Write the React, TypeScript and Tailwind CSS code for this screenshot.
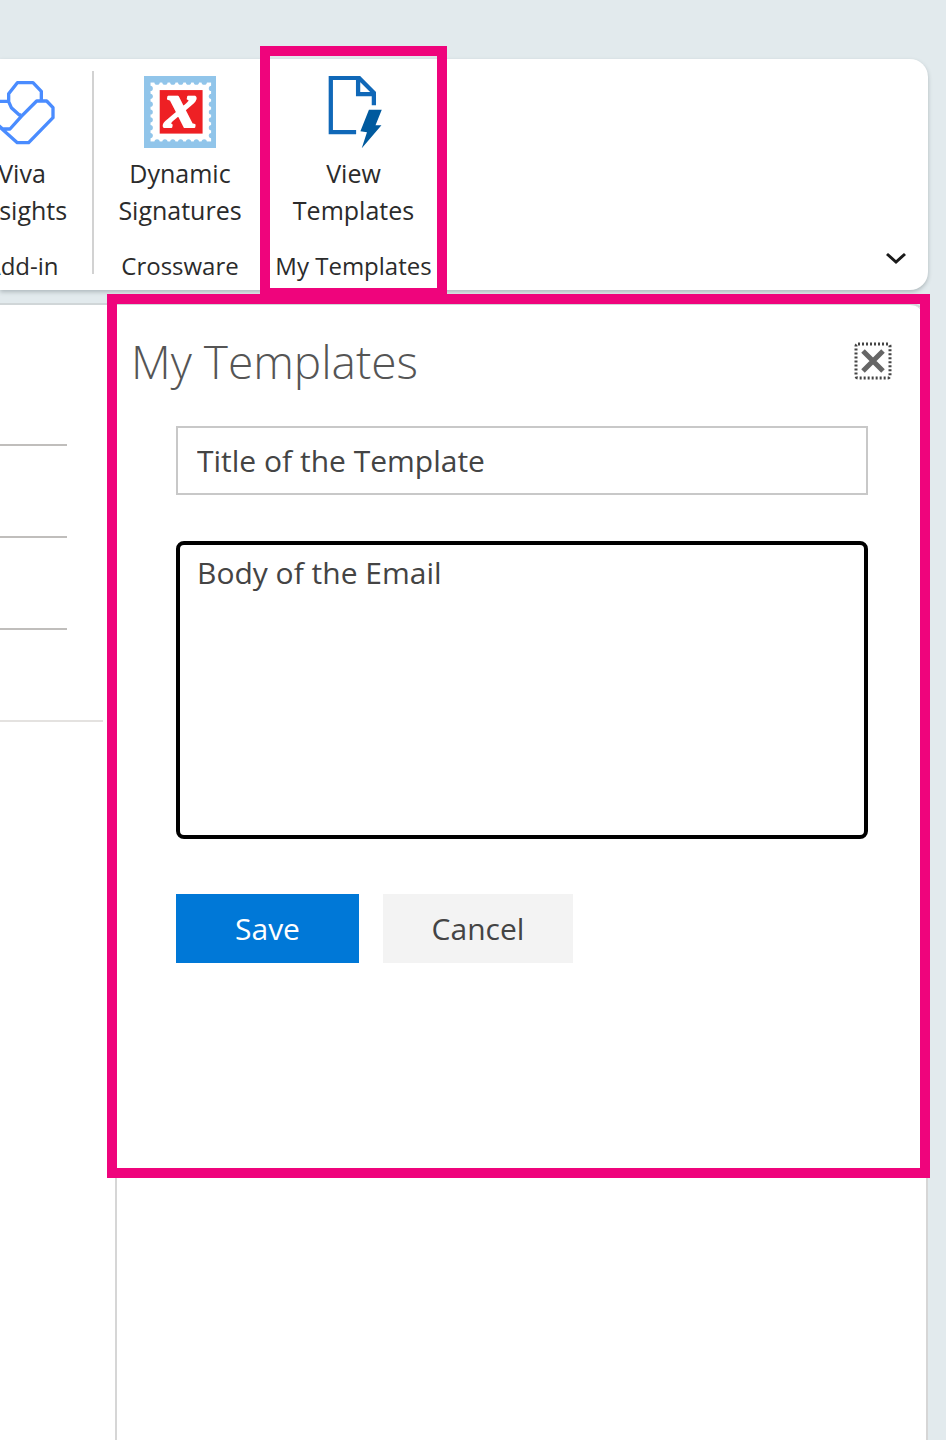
import { useState, type ReactNode } from "react";

interface RibbonGroupProps {
    icon: ReactNode;
    lines: [string, string];
    label: string;
    className: string;
    highlighted?: boolean;
}

function VivaIcon() {
    return (
        <svg className="size-18" viewBox="-42 107 216 216" fill="none" stroke="#4a8cff" strokeWidth="10" strokeLinejoin="round">
            <path d="M64 224 H58 L34 202 L26 184 V160 L52 127 H99 L124 153 V181" />
            <path d="M26 183 H-14 L-36 205 V230 L6 266 L52 307 H86 L159 232 V202 L140 182 H110 L64 228 L30 266 H8 L-6 254" />
        </svg>
    );
}

function StampIcon() {
    const marks = [43, 67, 91, 115, 139, 163, 187];
    return (
        <svg className="size-18" viewBox="0 0 220 220">
            <rect width="220" height="220" fill="#91c5ea" />
            <rect x="20" y="20" width="185" height="180" fill="#fff" />
            {marks.map((n) => (
                <g key={n} fill="#91c5ea">
                    <circle cx={n - 3} cy="19" r="8" />
                    <circle cx={n - 3} cy="201" r="8" />
                    <circle cx="19" cy={n - 5} r="8" />
                    <circle cx="206" cy={n - 5} r="8" />
                </g>
            ))}
            <rect x="48" y="43" width="131" height="133" fill="#ee2024" />
            <text
                x="113"
                y="156"
                textAnchor="middle"
                fill="#fff"
                stroke="#fff"
                strokeWidth="6"
                strokeLinejoin="round"
                className="font-['Liberation_Serif',serif] text-[200px] font-bold italic"
            >
                x
            </text>
        </svg>
    );
}

function TemplateIcon() {
    return (
        <svg className="size-18" viewBox="202 107 219 219" fill="none">
            <path d="M321 278 H244 V113 H330 L375 158 V196 M327 113 V162 H375" stroke="#1068b8" strokeWidth="13" />
            <path d="M360 210 H399 L380 257 H398 L338 327 L354 278 L334 275 Z" fill="#005a9e" />
        </svg>
    );
}

function RibbonGroup({ icon, lines, label, className, highlighted }: RibbonGroupProps) {
    return (
        <div className={`relative flex shrink-0 flex-col items-center pt-[17px] pb-1.5 ${className}`}>
            <button type="button" className="flex flex-col items-center">
                {icon}
                <span className="mt-[7px] whitespace-nowrap">
                    {lines[0]}
                    <br />
                    {lines[1]}
                </span>
            </button>
            <div className="mt-[18px] text-[24px] leading-[37px] whitespace-nowrap">{label}</div>
            {highlighted && (
                <div className="pointer-events-none absolute -top-[13px] -right-2.5 -bottom-2 -left-2.5 border-10 border-[#ef047c]" />
            )}
        </div>
    );
}

function Ribbon() {
    return (
        <div className="mr-[18px] flex rounded-r-[18px] bg-white text-center text-[25px] leading-[37px] shadow-[0_2px_4px_#aeb8bc]">
            <RibbonGroup icon={<VivaIcon />} lines={["Viva", "Insights"]} label="Add-in" className="-ml-12 w-[140px]" />
            <div className="mt-3 mb-4 w-[2px] shrink-0 bg-[#d2d2d2]" />
            <RibbonGroup icon={<StampIcon />} lines={["Dynamic", "Signatures"]} label="Crossware" className="w-[172px]" />
            <RibbonGroup
                icon={<TemplateIcon />}
                lines={["View", "Templates"]}
                label="My Templates"
                className="ml-1 w-[167px]"
                highlighted
            />
            <button type="button" aria-label="Collapse ribbon" className="mr-5 mb-5 ml-auto self-end">
                <svg className="size-6" viewBox="0 0 24 24" fill="none" stroke="#1a1a1a" strokeWidth="3">
                    <path d="M3 8 L12 16 L21 8" />
                </svg>
            </button>
        </div>
    );
}

function ComposePane() {
    return (
        <div className="w-[115px] shrink-0 pt-[49px]">
            <div className="mr-12 h-[92px] border-b-2 border-[#c0bebc]" />
            <div className="mr-12 h-[92px] border-b-2 border-[#c0bebc]" />
            <div className="mr-12 h-[92px] border-b-2 border-[#c0bebc]" />
            <div className="mr-3 h-[92px] border-b-2 border-[#e4e2e0]" />
        </div>
    );
}

function TemplatesPanel() {
    const [title, setTitle] = useState("Title of the Template");
    const [body, setBody] = useState("Body of the Email");

    return (
        <div className="relative min-w-0 grow rounded-tr-[18px] border-x-2 border-[#d6d6d6] pr-[58px] pl-[59px]">
            <div className="-mr-[24px] -ml-[45px] flex h-[121px] items-center justify-between pb-[10px]">
                <h1 className="text-[46px] leading-[60px] font-light text-[#555]">My Templates</h1>
                <button type="button" aria-label="Close" className="size-[38px]">
                    <svg viewBox="0 0 38 38" fill="none">
                        <rect x="2" y="2" width="34" height="34" rx="2" stroke="#444" strokeWidth="3" strokeDasharray="2 2" />
                        <path d="M9 9 L29 29 M29 9 L9 29" stroke="#666" strokeWidth="5" />
                    </svg>
                </button>
            </div>
            <input
                aria-label="Template title"
                value={title}
                onChange={(e) => setTitle(e.target.value)}
                className="block h-[69px] w-full border-2 border-[#c8c8c8] px-[19px] text-[30px] text-[#444] outline-none"
            />
            <textarea
                aria-label="Template body"
                value={body}
                onChange={(e) => setBody(e.target.value)}
                className="mt-[46px] block h-[298px] w-full resize-none rounded-lg border-4 border-black px-[17px] pt-2 text-[30px] leading-[40px] text-[#444] outline-none"
            />
            <div className="mt-[55px] flex gap-6 text-[30px]">
                <button type="button" className="h-[69px] w-[183px] bg-[#0078d7] text-white">
                    Save
                </button>
                <button type="button" className="h-[69px] w-[190px] bg-[#f3f3f3] text-[#444]">
                    Cancel
                </button>
            </div>
            <div className="pointer-events-none absolute -top-[11px] -right-1 -left-2.5 h-[884px] border-10 border-[#ef047c]" />
        </div>
    );
}

export default function App() {
    return (
        <div className="flex min-h-screen flex-col overflow-hidden bg-[#e2eaed] pt-[59px] font-['Open_Sans','Noto_Sans',sans-serif] text-[#2b2b2b]">
            <Ribbon />
            <main className="mt-[13px] mr-[18px] flex grow rounded-tr-[18px] border-t-2 border-[#d0d6d8] bg-white">
                <ComposePane />
                <TemplatesPanel />
            </main>
        </div>
    );
}
